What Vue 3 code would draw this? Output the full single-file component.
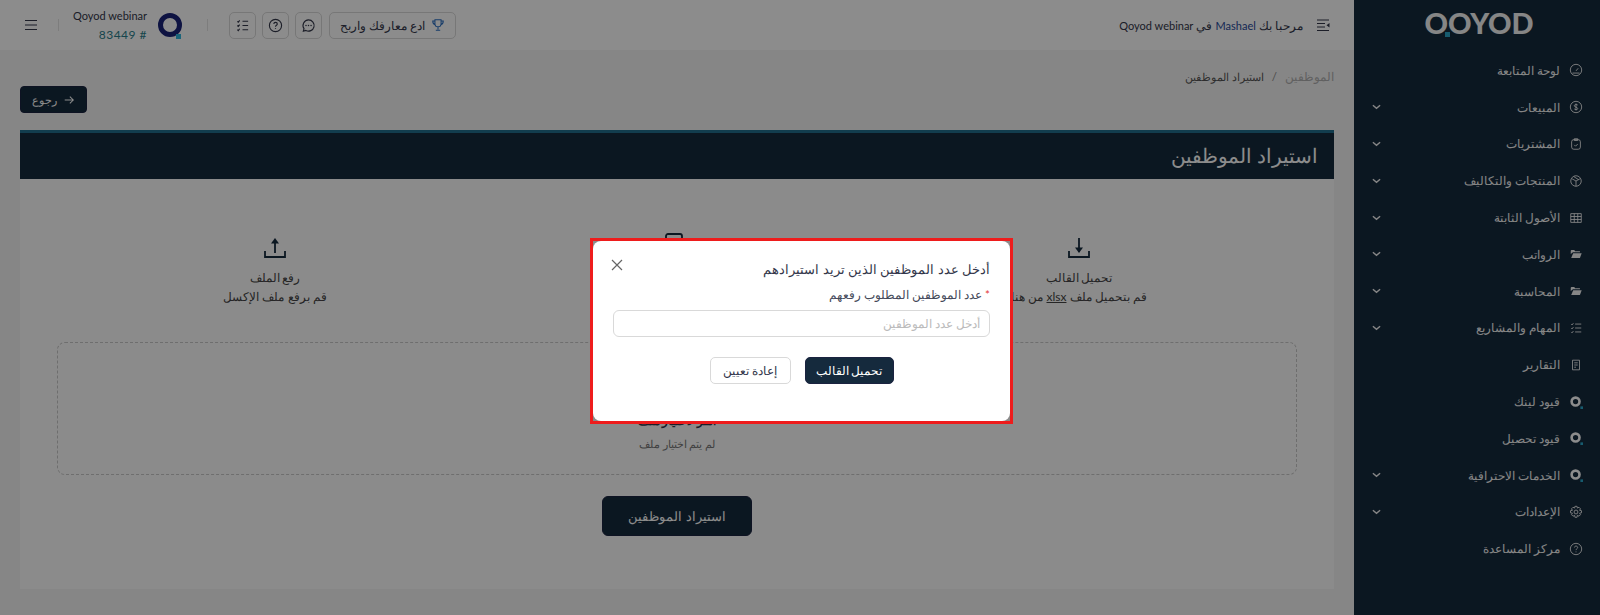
<script setup>
// عناصر القائمة الجانبية
const menu = [
  { label: 'لوحة المتابعة', icon: 'gauge' },
  { label: 'المبيعات', icon: 'dollar', arrow: true },
  { label: 'المشتريات', icon: 'clip', arrow: true },
  { label: 'المنتجات والتكاليف', icon: 'box', arrow: true },
  { label: 'الأصول الثابتة', icon: 'table', arrow: true },
  { label: 'الرواتب', icon: 'folder', arrow: true },
  { label: 'المحاسبة', icon: 'folder', arrow: true },
  { label: 'المهام والمشاريع', icon: 'tasks', arrow: true },
  { label: 'التقارير', icon: 'report' },
  { label: 'قيود لينك', icon: 'q' },
  { label: 'قيود تحصيل', icon: 'q' },
  { label: 'الخدمات الاحترافية', icon: 'q', arrow: true },
  { label: 'الإعدادات', icon: 'gear', arrow: true },
  { label: 'مركز المساعدة', icon: 'help' }
]
</script>

<template>
  <div class="page" dir="rtl">
    <aside class="sidebar">
      <div class="logo"><span>OOYOD</span><i></i></div>
      <ul class="menu">
        <li v-for="item in menu" :key="item.label">
          <span class="menu-icon">
            <svg v-if="item.icon === 'gauge'" viewBox="0 0 16 16"><circle cx="8" cy="8" r="6.5" /><path d="M8 9l2.5-3M4 11.5h8" /></svg>
            <svg v-else-if="item.icon === 'dollar'" viewBox="0 0 16 16"><circle cx="8" cy="8" r="6.5" /><path d="M10 5.8C9.4 5 6 4.8 6 6.6S10 8 10 9.8 6.6 11 6 10.2M8 4v8" /></svg>
            <svg v-else-if="item.icon === 'clip'" viewBox="0 0 16 16"><rect x="3" y="3" width="10" height="11" rx="2.5" /><path d="M6 2h4v2H6zM6 9l1.5 1.5L10 8" /></svg>
            <svg v-else-if="item.icon === 'box'" viewBox="0 0 16 16"><circle cx="8" cy="8" r="6" /><path d="M3.5 5.5L8 8l4.5-2.5M8 8v6M5.5 3L11 6.5" /></svg>
            <svg v-else-if="item.icon === 'table'" viewBox="0 0 16 16"><path d="M2 3h12v10H2zM2 6.3h12M2 9.7h12M6 3v10M10 3v10" /></svg>
            <svg v-else-if="item.icon === 'folder'" viewBox="0 0 16 16"><path class="solid" d="M2 4.5C2 4 2.3 3.500 3 3.500h3l1 1.300h5.500V6H4.500L2 8zM2.500 12.500L4.800 7h9.700l-2 5.500z" /></svg>
            <svg v-else-if="item.icon === 'tasks'" viewBox="0 0 16 16"><path d="M7 3.500h7M7 8h7M7 12.500h7M2.500 3.500l1 1 1.500-2M2.500 8l1 1 1.500-2M2.500 12.500l1 1 1.500-2" /></svg>
            <svg v-else-if="item.icon === 'report'" viewBox="0 0 16 16"><path d="M4 2.500h8v11H4zM6 5.500h4M6 8h4M6 10.500h2" /></svg>
            <svg v-else-if="item.icon === 'q'" viewBox="0 0 16 16"><circle class="ring" cx="7.5" cy="7.5" r="4.5" /><rect class="dot" x="13" y="13" width="3" height="3" /></svg>
            <svg v-else-if="item.icon === 'gear'" viewBox="0 0 16 16"><circle cx="8" cy="8" r="2.2" /><path d="M6.800 1.500h2.400l.4 2 1.800-.9 1.700 1.700-1 1.800 2.200.4v2.400l-2.200.4 1 1.800-1.700 1.700-1.800-1-.4 2.200H6.800l-.4-2.200-1.800 1-1.700-1.700 1-1.800-2.200-.4V6.500l2.200-.4-1-1.800 1.700-1.700 1.800.9z" /></svg>
            <svg v-else viewBox="0 0 16 16"><circle cx="8" cy="8" r="6.5" /><path d="M6.200 6.300C6.300 4 9.900 4.200 9.900 6.300 9.900 7.800 8 7.800 8 9.300M8 10.800v1" /></svg>
          </span>
          <span class="menu-label">{{ item.label }}</span>
          <svg v-if="item.arrow" class="chevron" viewBox="0 0 10 6"><path d="M1 1l4 3.500L9 1" /></svg>
        </li>
      </ul>
    </aside>

    <main class="main">
      <header class="topbar">
        <div class="welcome">
          <svg class="outdent" viewBox="0 0 14 14"><path d="M1 2h12M1 5.500h8M1 9h8M1 12.500h12" /><path class="fill" d="M13.500 5l-3 2.300 3 2.200z" /></svg>
          <span>مرحبا بك <b class="latin">Mashael</b> في <span class="latin">Qoyod webinar</span></span>
        </div>
        <div class="tools">
          <button class="invite">
            <svg viewBox="0 0 16 16"><path d="M4.500 2h7v4.500a3.500 3.500 0 0 1-7 0zM4.500 3.500H2c0 3 1 4 3 4.300M11.500 3.500H14c0 3-1 4-3 4.300M8 10v3M5.500 14h5" /></svg>
            ادع معارفك واربح
          </button>
          <button class="square">
            <svg viewBox="0 0 16 16"><path d="M8 2a6 6 0 1 1-2.800 11.300L2.500 14l.7-2.600A6 6 0 0 1 8 2z" /><circle class="pt" cx="5.300" cy="8" r=".8" /><circle class="pt" cx="8" cy="8" r=".8" /><circle class="pt" cx="10.700" cy="8" r=".8" /></svg>
          </button>
          <button class="square">
            <svg viewBox="0 0 16 16"><circle cx="8" cy="8" r="6.5" /><path d="M6.200 6.300C6.300 4 9.900 4.200 9.900 6.300 9.900 7.800 8 7.800 8 9.300M8 10.800v1" /></svg>
          </button>
          <button class="square">
            <svg viewBox="0 0 16 16"><path d="M8 3.500h6M8 8h6M8 12.500h6M2.500 3.500l1 1 1.500-2M2.500 8l1 1 1.500-2M2.500 12.500l1 1 1.500-2" /></svg>
          </button>
          <span class="sep first"></span>
          <span class="avatar"><i></i></span>
          <div class="company">
            <div class="latin" dir="ltr">Qoyod webinar</div>
            <div class="number"># 83449</div>
          </div>
          <span class="sep"></span>
          <svg class="burger" viewBox="0 0 14 12"><path d="M1 1.500h12M1 6h12M1 10.500h12" /></svg>
        </div>
      </header>

      <div class="content">
        <div class="crumbs">
          <span class="muted">الموظفين</span>
          <span class="slash">/</span>
          <span class="current">استيراد الموظفين</span>
        </div>
        <div class="actions">
          <button class="back">
            <svg viewBox="0 0 14 14"><path d="M2 7h10M8 3l4 4-4 4" /></svg>
            رجوع
          </button>
        </div>

        <section class="card">
          <h1 class="card-title">استيراد الموظفين</h1>
          <div class="card-body">
            <div class="steps">
              <div class="step">
                <svg viewBox="0 0 24 24"><path d="M12 2v14" /><path class="head" d="M8 11.500h8L12 17z" /><path d="M2 15v6h20v-6" /></svg>
                <div class="step-title">تحميل القالب</div>
                <div class="step-desc">قم بتحميل ملف <u>xlsx</u> من هنا</div>
              </div>
              <div class="step">
                <svg class="sheet" viewBox="0 0 24 27"><rect x="1" y="1" width="16" height="24" rx="2" /><path d="M5 8h8M5 13h8M5 18h8" /></svg>
                <div class="step-title">تعبئة البيانات</div>
                <div class="step-desc">قم بتعبئة بيانات الموظفين</div>
              </div>
              <div class="step">
                <svg viewBox="0 0 24 24"><path d="M12 17V4" /><path class="head" d="M8 7.500h8L12 2z" /><path d="M2 15v6h20v-6" /></svg>
                <div class="step-title">رفع الملف</div>
                <div class="step-desc">قم برفع ملف الإكسل</div>
              </div>
            </div>
            <div class="dropzone">
              <div class="drop-title">انقر لاختيار ملف</div>
              <div class="drop-note">لم يتم اختيار ملف</div>
            </div>
            <div class="submit-row">
              <button class="submit">استيراد الموظفين</button>
            </div>
          </div>
        </section>
      </div>
    </main>

    <div class="overlay">
      <div class="frame">
        <div class="dialog">
          <svg class="close" viewBox="0 0 12 12"><path d="M1 1l10 10M11 1L1 11" /></svg>
          <h2 class="dialog-title">أدخل عدد الموظفين الذين تريد استيرادهم</h2>
          <label class="field-label"><em>*</em> عدد الموظفين المطلوب رفعهم</label>
          <input class="field" type="text" placeholder="أدخل عدد الموظفين" />
          <div class="dialog-actions">
            <button class="primary">تحميل القالب</button>
            <button class="reset">إعادة تعيين</button>
          </div>
        </div>
      </div>
    </div>
  </div>
</template>

<style>
html, body {
  margin: 0;
  overflow: hidden;
}
</style>

<style scoped>
* {
  box-sizing: border-box;
}
.page {
  position: relative;
  display: flex;
  width: 1600px;
  height: 615px;
  overflow: hidden;
  background: #f4f4f4;
  color: #33374a;
  font-family: Lato, "Noto Sans", sans-serif;
  font-size: 12px;
}
button {
  font-family: inherit;
  cursor: pointer;
}
svg {
  fill: none;
  stroke: currentColor;
  stroke-width: 1.2;
}
.latin {
  font-size: 11px;
}

/* القائمة الجانبية */
.sidebar {
  flex: 0 0 246px;
  height: 615px;
  background: #152a3d;
  color: #f4f4f4;
}
.logo {
  position: relative;
  height: 50px;
  display: flex;
  justify-content: center;
  padding: 5px 0 0 4px;
  direction: ltr;
  font-family: Lato, sans-serif;
  font-size: 29px;
  font-weight: 900;
  line-height: 36px;
}
.logo i {
  position: absolute;
  left: 91px;
  top: 32px;
  width: 5px;
  height: 5px;
  background: #2aa6c9;
}
.menu {
  list-style: none;
  margin: 0;
  padding: 2px 0 0;
}
.menu li {
  display: flex;
  align-items: center;
  height: 36.8px;
  padding: 0 17px 0 18px;
}
.menu-icon {
  flex: 0 0 14px;
  height: 14px;
  margin-left: 9px;
}
.menu-icon svg {
  display: block;
  width: 14px;
  height: 14px;
  stroke-width: 1;
}
.menu-icon .solid {
  fill: currentColor;
  stroke: none;
}
.menu-icon .ring {
  stroke: #fff;
  stroke-width: 3;
}
.menu-icon .dot {
  fill: #2aa6c9;
  stroke: none;
}
.menu-label {
  flex: 1;
  font-size: 12px;
}
.chevron {
  width: 9px;
  height: 6px;
  stroke-width: 1.6;
}

/* الشريط العلوي */
.main {
  flex: 1;
  min-width: 0;
}
.topbar {
  display: flex;
  justify-content: space-between;
  align-items: center;
  height: 50px;
  padding: 0 24px;
  background: #fff;
}
.welcome {
  display: flex;
  align-items: center;
  gap: 13px;
  font-size: 12px;
}
.welcome b {
  font-weight: 400;
  color: #2a4a9a;
}
.outdent {
  width: 14px;
  height: 14px;
  stroke-width: 1;
}
.outdent .fill {
  fill: currentColor;
  stroke: none;
}
.tools {
  display: flex;
  align-items: center;
}
.invite,
.square {
  display: flex;
  align-items: center;
  justify-content: center;
  background: transparent;
  border: 1px solid #d9d9d9;
  border-radius: 5px;
  color: #33374a;
}
.invite {
  gap: 6px;
  width: 127px;
  height: 27px;
  margin-left: 7px;
  padding: 0;
  font-size: 12px;
}
.invite svg {
  width: 14px;
  height: 14px;
  color: #2d6fc0;
}
.square {
  width: 27px;
  height: 27px;
  margin-left: 6px;
  padding: 0;
}
.square svg {
  width: 15px;
  height: 15px;
}
.square .pt {
  fill: currentColor;
  stroke: none;
}
.sep {
  width: 1px;
  height: 12px;
  background: #e4e4e4;
  margin: 0 14px 0 20px;
}
.sep.first {
  margin: 0 15px 0 25px;
}
.avatar {
  position: relative;
  width: 24px;
  height: 24px;
  border: 5px solid #1a2478;
  border-radius: 50%;
}
.avatar i {
  position: absolute;
  left: 13px;
  bottom: -7px;
  width: 5px;
  height: 5px;
  background: #30b6dc;
}
.company {
  margin-right: 11px;
  color: #33374a;
  font-size: 12px;
  line-height: 19px;
  text-align: right;
}
.number {
  color: #2b7f8c;
  letter-spacing: 0.5px;
}
.burger {
  width: 14px;
  height: 12px;
}

/* المحتوى */
.content {
  padding: 18px 20px 0;
}
.crumbs {
  display: flex;
  gap: 8px;
  height: 18px;
  line-height: 18px;
  font-size: 11.5px;
}
.muted {
  color: #b0b0b0;
}
.slash {
  color: #888;
}
.current {
  color: #555;
  font-size: 11px;
}
.actions {
  display: flex;
  justify-content: flex-end;
  height: 44px;
}
.back {
  display: flex;
  align-items: center;
  justify-content: center;
  gap: 6px;
  width: 67px;
  height: 27px;
  padding: 0;
  background: #152a3d;
  border: 1px solid #1b2340;
  border-radius: 4px;
  color: #fff;
  font-size: 11px;
}
.back svg {
  width: 12px;
  height: 12px;
}
.card {
  height: 459px;
  background: #fdfdfd;
}
.card-title {
  margin: 0;
  height: 49px;
  padding: 0 16px 0 0;
  background: #152a3d;
  border-top: 3px solid #22708f;
  color: #fff;
  font-size: 20px;
  font-weight: 400;
  line-height: 44px;
}
.card-body {
  padding: 57px 37px 0;
}
.steps {
  display: grid;
  grid-template-columns: repeat(3, 1fr);
  padding: 0 17px;
}
.step {
  display: flex;
  flex-direction: column;
  align-items: center;
  height: 106px;
  color: #444;
  text-align: center;
}
.step svg {
  width: 24px;
  height: 24px;
  color: #152a3d;
  stroke-width: 1.8;
  margin-bottom: 9px;
}
.step svg.sheet {
  height: 27px;
  margin-top: -3px;
}
.step .head {
  fill: currentColor;
  stroke: none;
}
.step-title {
  font-size: 11.5px;
  line-height: 18px;
}
.step-desc {
  line-height: 19px;
}
.dropzone {
  height: 133px;
  padding-top: 68px;
  border: 1px dashed #c8c8c8;
  border-radius: 8px;
  text-align: center;
}
.drop-title {
  line-height: 20px;
  font-weight: 700;
}
.drop-note {
  margin-top: 4px;
  color: #777;
  font-size: 11px;
  line-height: 18px;
}
.submit-row {
  display: flex;
  justify-content: center;
  padding-top: 21px;
}
.submit {
  width: 150px;
  height: 40px;
  background: #152a3d;
  border: 1px solid #1b2340;
  border-radius: 6px;
  color: #fff;
  font-size: 13px;
  font-weight: 500;
}

/* النافذة المنبثقة */
.overlay {
  position: absolute;
  inset: 0;
  display: flex;
  justify-content: center;
  align-items: flex-start;
  padding-top: 238px;
  background: rgba(0, 0, 0, 0.45);
}
.frame {
  width: 423px;
  height: 186px;
  margin-left: 3px;
  border: 3px solid #ee1c1c;
}
.dialog {
  position: relative;
  height: 100%;
  padding: 19px 20px 0;
  background: #fff;
  border-radius: 8px;
  color: #33374a;
}
.close {
  position: absolute;
  left: 18px;
  top: 18px;
  width: 12px;
  height: 12px;
  color: #666;
}
.dialog-title {
  margin: 0;
  font-size: 13px;
  font-weight: 400;
  line-height: 18px;
}
.field-label {
  display: block;
  margin-top: 8px;
  height: 17px;
  color: #444a5a;
  font-size: 11.5px;
  line-height: 17px;
}
.field-label em {
  color: #e53935;
  font-style: normal;
}
.field {
  display: block;
  width: 100%;
  height: 27px;
  margin-top: 7px;
  padding: 0 9px;
  border: 1px solid #d9d9d9;
  border-radius: 6px;
  font-family: inherit;
  font-size: 12px;
  outline: none;
}
.field::placeholder {
  color: #bbb;
}
.dialog-actions {
  display: flex;
  justify-content: center;
  gap: 14px;
  margin-top: 20px;
}
.primary,
.reset {
  height: 27px;
  padding: 0;
  border-radius: 5px;
  font-size: 12px;
}
.primary {
  width: 89px;
  background: #152a3d;
  border: 1px solid #1b2340;
  color: #fff;
  font-size: 11.5px;
  font-weight: 500;
}
.reset {
  width: 81px;
  background: #fff;
  border: 1px solid #d9d9d9;
  color: #33374a;
}
</style>
